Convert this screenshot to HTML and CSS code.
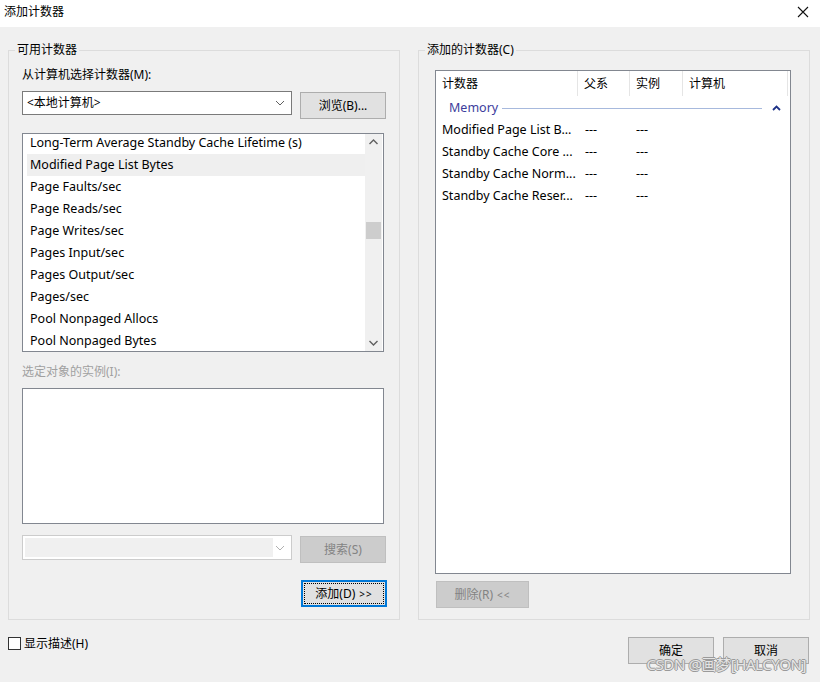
FILE: index.html
```html
<!DOCTYPE html>
<html lang="zh-CN">
<head>
<meta charset="utf-8">
<title>添加计数器</title>
<link rel="stylesheet" href="styles.css">
</head>
<body>
<div class="window">
  <div class="titlebar">
    <span class="title">添加计数器</span>
    <svg class="close" width="12" height="12" viewBox="0 0 12 12"><path d="M1 1L11 11M11 1L1 11" stroke="#111" stroke-width="1.1" fill="none"/></svg>
  </div>

  <div class="panels">
    <fieldset class="group">
      <legend>可用计数器</legend>
      <div class="group-body left-body">
        <div class="label">从计算机选择计数器(M):</div>
        <div class="row">
          <div class="combo">
            <span class="combo-text">&lt;本地计算机&gt;</span>
            <svg class="chev" width="10" height="6" viewBox="0 0 10 6"><path d="M1 1L5 5L9 1" stroke="#606060" stroke-width="1" fill="none"/></svg>
          </div>
          <div class="btn btn-browse">浏览(B)...</div>
        </div>

        <div class="listbox">
          <div class="items">
            <div class="item">Long-Term Average Standby Cache Lifetime (s)</div>
            <div class="item selected">Modified Page List Bytes</div>
            <div class="item">Page Faults/sec</div>
            <div class="item">Page Reads/sec</div>
            <div class="item">Page Writes/sec</div>
            <div class="item">Pages Input/sec</div>
            <div class="item">Pages Output/sec</div>
            <div class="item">Pages/sec</div>
            <div class="item">Pool Nonpaged Allocs</div>
            <div class="item">Pool Nonpaged Bytes</div>
          </div>
          <div class="vscroll">
            <svg class="arrow" width="17" height="17" viewBox="0 0 17 17"><path d="M4.5 10L8.5 6L12.5 10" stroke="#606060" stroke-width="1.4" fill="none"/></svg>
            <div class="track"><div class="thumb"></div></div>
            <svg class="arrow" width="17" height="17" viewBox="0 0 17 17"><path d="M4.5 7L8.5 11L12.5 7" stroke="#606060" stroke-width="1.4" fill="none"/></svg>
          </div>
        </div>

        <div class="label disabled label-inst">选定对象的实例(I):</div>
        <div class="instances"></div>

        <div class="row row-search">
          <div class="combo combo-disabled">
            <span class="combo-fill"></span>
            <svg class="chev" width="10" height="6" viewBox="0 0 10 6"><path d="M1 1L5 5L9 1" stroke="#b0b0b0" stroke-width="1" fill="none"/></svg>
          </div>
          <div class="btn btn-disabled btn-search">搜索(S)</div>
        </div>

        <div class="row-add">
          <div class="btn btn-default"><span class="focus">添加(D) <span class="gt">&gt;&gt;</span></span></div>
        </div>
      </div>
    </fieldset>

    <fieldset class="group">
      <legend>添加的计数器(C)</legend>
      <div class="group-body right-body">
        <div class="listview">
          <div class="lv-header">
            <div class="col c1">计数器</div>
            <div class="col c2">父系</div>
            <div class="col c3">实例</div>
            <div class="col c4">计算机</div>
          </div>
          <div class="lv-group">
            <span class="g-name">Memory</span>
            <span class="g-line"></span>
            <svg class="g-caret" width="9" height="6" viewBox="0 0 9 6"><path d="M1 5L4.5 1.5L8 5" stroke="#1e3287" stroke-width="1.8" fill="none"/></svg>
          </div>
          <div class="lv-row"><span class="cell c1">Modified Page List B...</span><span class="cell c2">---</span><span class="cell c3">---</span></div>
          <div class="lv-row"><span class="cell c1">Standby Cache Core ...</span><span class="cell c2">---</span><span class="cell c3">---</span></div>
          <div class="lv-row"><span class="cell c1">Standby Cache Norm...</span><span class="cell c2">---</span><span class="cell c3">---</span></div>
          <div class="lv-row"><span class="cell c1">Standby Cache Reser...</span><span class="cell c2">---</span><span class="cell c3">---</span></div>
        </div>
        <div class="btn btn-disabled btn-delete">删除(R) <span class="gt">&lt;&lt;</span></div>
      </div>
    </fieldset>
  </div>

  <div class="footer">
    <label class="check"><span class="box"></span><span>显示描述(H)</span></label>
    <div class="footer-btns">
      <div class="btn btn-ok">确定</div>
      <div class="btn btn-cancel">取消</div>
    </div>
    <div class="watermark">CSDN @画梦[HALCYON]</div>
  </div>
</div>
</body>
</html>
```

FILE: styles.css
```css
* { box-sizing: border-box; }

html, body {
  margin: 0;
  padding: 0;
}

body {
  width: 820px;
  height: 682px;
  overflow: hidden;
  background: #f0f0f0;
  font-family: "Noto Sans", "Noto Sans CJK SC", sans-serif;
  font-size: 12px;
  line-height: 16px;
  color: #000;
}

.window {
  position: relative;
  width: 820px;
  height: 682px;
  display: flex;
  flex-direction: column;
}

.titlebar {
  height: 27px;
  background: #fff;
  display: flex;
  align-items: center;
  justify-content: space-between;
  padding: 0 11px 3px 4px;
}

.title { font-size: 12px; }

.close { display: block; }

.panels {
  display: flex;
  gap: 18px;
  padding: 15px 0 0 8px;
}

.group {
  margin: 0;
  width: 392px;
  border: 1px solid #dcdcdc;
  padding: 0 0 11px 6px;
  min-width: 0;
}

.group legend {
  padding: 0 2px;
  line-height: 16px;
  font-size: 12px;
}

.left-body { padding-left: 7px; }
.right-body { padding-left: 10px; }

.label {
  margin-top: 9px;
  height: 16px;
}

.disabled { color: #a0a0a0; }

.row {
  display: flex;
  gap: 8px;
  align-items: flex-start;
  margin-top: 8px;
}

.combo {
  width: 270px;
  height: 24px;
  background: #fff;
  border: 1px solid #7a7a7a;
  display: flex;
  align-items: center;
  justify-content: space-between;
  padding: 0 6px 0 4px;
}

.combo-text { line-height: 16px; }

.chev { display: block; }

.btn {
  height: 27px;
  background: #e1e1e1;
  border: 1px solid #adadad;
  display: flex;
  align-items: center;
  justify-content: center;
  font-size: 12px;
}

.btn-browse {
  width: 86px;
  margin-top: 1px;
}

.listbox {
  margin-top: 14px;
  width: 362px;
  height: 219px;
  border: 1px solid #828790;
  background: #fff;
  display: flex;
  overflow: hidden;
}

.items {
  flex: 1;
  padding-left: 4px;
  margin-top: -2px;
}

.item {
  height: 22px;
  line-height: 22px;
  padding-left: 3px;
  white-space: nowrap;
  font-size: 12.5px;
}

.item.selected { background: #efefef; }

.vscroll {
  width: 17px;
  background: #f0f0f0;
  display: flex;
  flex-direction: column;
  margin-right: 1px;
}

.arrow { display: block; flex: none; }

.track {
  flex: 1;
  padding-top: 71px;
}

.thumb {
  height: 17px;
  margin: 0 1px;
  background: #cdcdcd;
}

.label-inst { margin-top: 12px; }

.instances {
  margin-top: 8px;
  width: 362px;
  height: 136px;
  background: #fff;
  border: 1px solid #828790;
}

.row-search { margin-top: 11px; }

.combo-disabled {
  height: 25px;
  border-color: #cccccc;
  padding: 2px 6px 2px 2px;
}

.combo-fill {
  align-self: stretch;
  width: 248px;
  background: #f0f0f0;
}

.btn-disabled {
  background: #cccccc;
  border-color: #bfbfbf;
  color: #838383;
}

.btn-search {
  width: 86px;
  margin-top: 1px;
}

.row-add {
  margin-top: 17px;
  display: flex;
  justify-content: flex-end;
  padding-right: 12px;
}

.btn-default {
  width: 86px;
  border: 2px solid #0078d7;
  padding: 1px;
}

.focus {
  flex: 1;
  align-self: stretch;
  border: 1px dotted #000;
  display: flex;
  align-items: center;
  justify-content: center;
}

.gt {
  font-size: 10px;
  letter-spacing: 1px;
  margin-left: 4px;
}

/* list view */
.listview {
  margin-top: 12px;
  width: 356px;
  height: 504px;
  background: #fff;
  border: 1px solid #828790;
}

.lv-header {
  display: flex;
  height: 26px;
}

.col {
  padding-left: 6px;
  padding-top: 1px;
  line-height: 24px;
  border-right: 1px solid #e5e5e5;
  height: 25px;
}

.lv-header .c1 { width: 142px; padding-left: 6px; }
.lv-header .c2 { width: 52px; }
.lv-header .c3 { width: 53px; }
.lv-header .c4 { width: 105px; }

.lv-group {
  height: 22px;
  display: flex;
  align-items: center;
  padding-left: 13px;
  padding-right: 9px;
  padding-bottom: 1px;
}

.g-name {
  color: #3c3c9c;
  font-size: 12.5px;
}

.g-line {
  flex: 1;
  height: 1px;
  background: #a7b9dd;
  margin: 1px 8px 0 4px;
}

.g-caret { display: block; margin-left: 2px; }

.lv-row {
  height: 22px;
  display: flex;
  align-items: center;
  font-size: 12.5px;
}

.cell {
  white-space: nowrap;
}

.lv-row .c1 { width: 141px; padding: 0 2px 0 6px; }
.lv-row .c2 { width: 51px; padding-left: 8px; }
.lv-row .c3 { width: 54px; padding-left: 8px; }

.btn-delete {
  margin-top: 7px;
  margin-left: 1px;
  width: 93px;
}

/* footer */
.footer {
  display: flex;
  justify-content: space-between;
  align-items: flex-start;
  padding: 17px 11px 0 8px;
}

.check {
  display: flex;
  align-items: center;
  gap: 3px;
  height: 13px;
}

.box {
  width: 13px;
  height: 13px;
  border: 1px solid #333;
  background: #fff;
}

.footer-btns {
  display: flex;
  gap: 9px;
}

.btn-ok, .btn-cancel { width: 86px; }

.watermark {
  position: absolute;
  right: 14px;
  bottom: 9px;
  font-size: 15px;
  line-height: 18px;
  color: rgba(255, 255, 255, 0.75);
  text-shadow: -1px 0 #9a9a9a, 1px 0 #9a9a9a, 0 -1px #9a9a9a, 0 1px #9a9a9a;
  letter-spacing: -0.4px;
}
```
